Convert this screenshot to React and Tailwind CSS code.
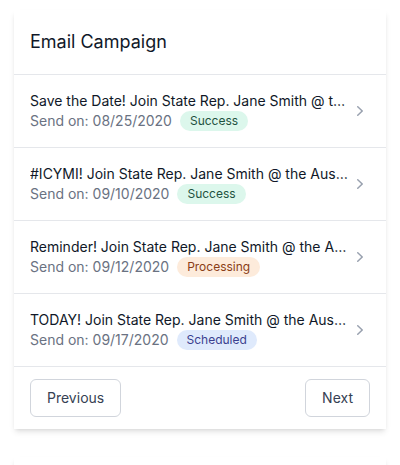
import React from 'react';

const campaigns = [
    { title: 'Save the Date! Join State Rep. Jane Smith @ the Austin Meetup', date: '08/25/2020', status: 'Success' },
    { title: '#ICYMI! Join State Rep. Jane Smith @ the Austin Meetup', date: '09/10/2020', status: 'Success' },
    { title: 'Reminder! Join State Rep. Jane Smith @ the Austin Meetup', date: '09/12/2020', status: 'Processing' },
    { title: 'TODAY! Join State Rep. Jane Smith @ the Austin Meetup', date: '09/17/2020', status: 'Scheduled' },
];

const badgeStyles = {
    Success: 'bg-[#dcf7ec] text-[#1f5240]',
    Processing: 'bg-[#fdebdb] text-[#8a3d16]',
    Scheduled: 'bg-[#dfeafc] text-[#3b3f8f]',
};

function ChevronRight() {
    return (
        <svg className="h-5 w-5 shrink-0 text-gray-400" viewBox="0 0 20 20" fill="currentColor">
            <path fillRule="evenodd" d="M7.21 14.77a.75.75 0 01.02-1.06L11.168 10 7.23 6.29a.75.75 0 111.04-1.08l4.5 4.25a.75.75 0 010 1.08l-4.5 4.25a.75.75 0 01-1.06-.02z" clipRule="evenodd" />
        </svg>
    );
}

export default function App() {
    return (
        <div className="h-[465px] overflow-hidden bg-white px-[14px] pt-[10px] font-['Inter',sans-serif]">
            <div className="bg-white shadow-md">
                <div className="border-b border-gray-200 px-4 py-[18px]">
                    <h2 className="text-lg leading-7 text-gray-900">Email Campaign</h2>
                </div>
                <ul>
                    {campaigns.map((c) => (
                        <li key={c.date} className="flex items-center border-b border-gray-200 px-4 py-4">
                            <div className="min-w-0 flex-1">
                                <p className="truncate text-sm leading-5 text-gray-900">{c.title}</p>
                                <div className="flex items-center text-sm leading-5 text-gray-500">
                                    <span>Send on: {c.date}</span>
                                    <span className={`ml-2 rounded-full px-2.5 py-0.5 text-xs leading-4 ${badgeStyles[c.status]}`}>
                                        {c.status}
                                    </span>
                                </div>
                            </div>
                            <ChevronRight />
                        </li>
                    ))}
                </ul>
                <div className="flex items-center justify-between px-4 py-3">
                    <button className="rounded-md border border-gray-300 bg-white px-4 py-2 text-sm leading-5 text-gray-700">
                        Previous
                    </button>
                    <button className="rounded-md border border-gray-300 bg-white px-4 py-2 text-sm leading-5 text-gray-700">
                        Next
                    </button>
                </div>
            </div>
            <div className="mt-7 h-20 bg-white shadow-md"></div>
        </div>
    );
}
